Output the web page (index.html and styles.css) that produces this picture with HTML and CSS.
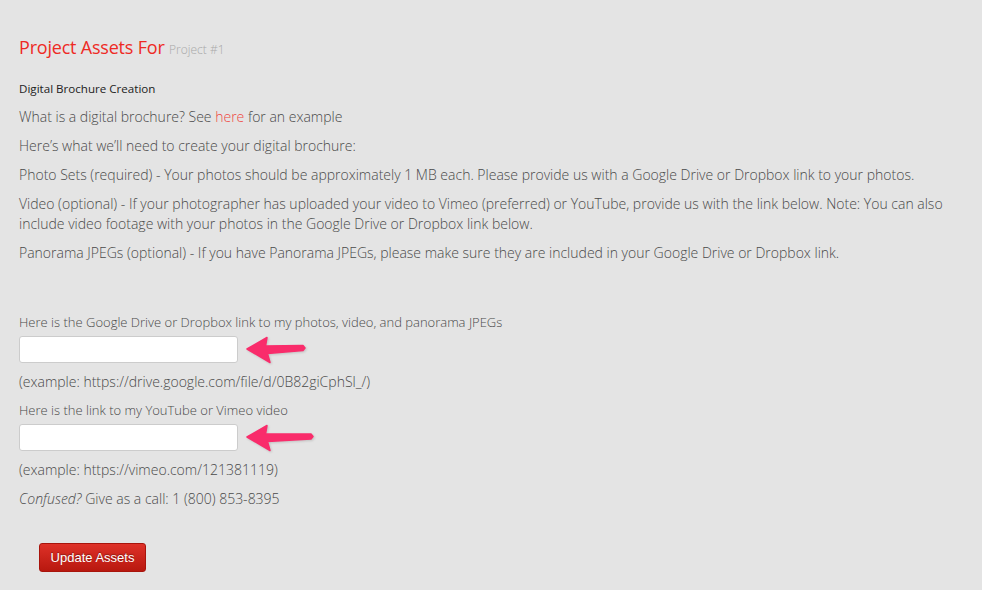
FILE: index.html
```html
<!DOCTYPE html>
<html lang="en">
<head>
    <meta charset="UTF-8">
    <meta name="viewport" content="width=device-width, initial-scale=1.0">
    <title>Project Assets</title>
    <link rel="stylesheet" href="styles.css">
</head>
<body>
    <div class="page">
        <h1 class="title">Project Assets For <small>Project #1</small></h1>

        <h4 class="subtitle">Digital Brochure Creation</h4>
        <p>What is a digital brochure? See <a href="#">here</a> for an example</p>
        <p>Here’s what we’ll need to create your digital brochure:</p>
        <p>Photo Sets (required) - Your photos should be approximately 1 MB each. Please provide us with a Google Drive or Dropbox link to your photos.</p>
        <p>Video (optional) - If your photographer has uploaded your video to Vimeo (preferred) or YouTube, provide us with the link below. Note: You can also include video footage with your photos in the Google Drive or Dropbox link below.</p>
        <p>Panorama JPEGs (optional) - If you have Panorama JPEGs, please make sure they are included in your Google Drive or Dropbox link.</p>

        <form class="assets-form">
            <label for="photos">Here is the Google Drive or Dropbox link to my photos, video, and panorama JPEGs</label>
            <div class="field">
                <input type="text" id="photos">
                <svg class="arrow" width="62" height="28" viewBox="0 0 62 28">
                    <path d="M1 13 L21 1.5 L19.5 10 L57 9.5 L59 12 L57 14.5 L21.5 17.5 L24 26.5 Z" />
                </svg>
            </div>
            <p class="hint">(example: https://drive.google.com/file/d/0B82giCphSl_/)</p>

            <label for="video">Here is the link to my YouTube or Vimeo video</label>
            <div class="field">
                <input type="text" id="video">
                <svg class="arrow" width="70" height="28" viewBox="0 0 70 28">
                    <path d="M1 13 L21 1.5 L19.5 10 L65 10 L67 12.5 L65 15 L21.5 17.5 L24 26.5 Z" />
                </svg>
            </div>
            <p class="hint">(example: https://vimeo.com/121381119)</p>

            <p><em>Confused?</em> Give as a call: 1 (800) 853-8395</p>

            <button type="button" class="btn-update">Update Assets</button>
        </form>
    </div>
</body>
</html>
```

FILE: styles.css
```css
body {
    margin: 0;
    background: #e4e4e4;
    font-family: 'Open Sans', sans-serif;
    font-weight: 300;
    color: #4a4a4a;
}

.page {
    padding: 35px 19px 20px;
}

.title {
    margin: 0 0 17px;
    font-size: 18px;
    font-weight: normal;
    line-height: 24px;
    letter-spacing: -0.2px;
    color: #ee2a24;
}

.title small {
    font-size: 12px;
    font-weight: 300;
    letter-spacing: 0;
    color: #a8a8a8;
}

.subtitle {
    margin: 0 0 8px;
    font-size: 11.6px;
    font-weight: normal;
    line-height: 20px;
    color: #222;
}

p {
    margin: 0 0 9px;
    font-size: 14px;
    line-height: 20px;
}

a {
    color: #f0453f;
    text-decoration: none;
}

.assets-form {
    margin-top: 50px;
}

label {
    display: block;
    font-size: 13px;
    line-height: 18px;
    margin-bottom: 4px;
}

.field {
    display: flex;
    align-items: center;
    gap: 8px;
}

.field input {
    width: 219px;
    height: 27px;
    box-sizing: border-box;
    padding: 3px 6px;
    border: 1px solid #ccc;
    border-radius: 3px;
    background: #fff;
    font-family: 'Open Sans', sans-serif;
    font-size: 13px;
}

.arrow {
    margin-top: 1px;
    fill: #f92c6b;
    stroke: #f92c6b;
    stroke-width: 1.5;
    stroke-linejoin: round;
    filter: drop-shadow(1px 1px 1px rgba(0, 0, 0, 0.15));
}

.hint {
    margin-top: 8px;
}

em {
    font-style: italic;
}

.btn-update {
    margin: 25px 0 0 20px;
    width: 107px;
    height: 29px;
    padding: 0;
    border: 1px solid #a8140c;
    border-radius: 3px;
    background: linear-gradient(#de3128, #b8180f);
    color: #fff;
    font-family: 'Liberation Sans', Arial, sans-serif;
    font-size: 13px;
    text-shadow: 0 -1px 1px rgba(0, 0, 0, 0.35);
    cursor: pointer;
}
```
